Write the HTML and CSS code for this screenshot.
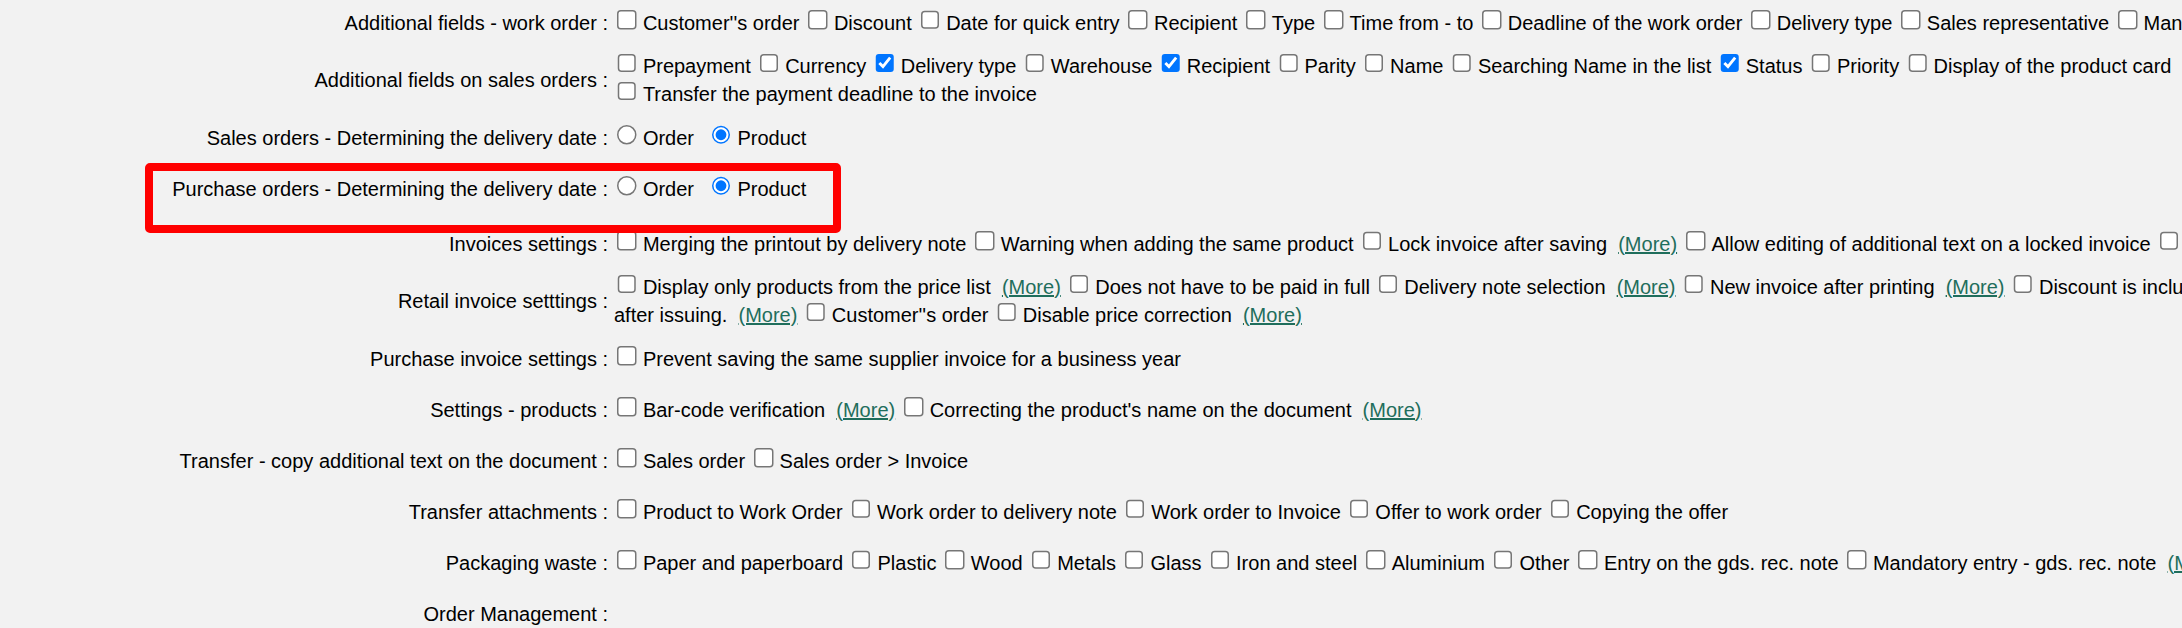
FILE: index.html
```html
<!DOCTYPE html>
<html>
<head>
<meta charset="utf-8">
<title>Settings</title>
<link rel="stylesheet" href="styles.css">
</head>
<body>
<div class="page">
<table class="settings">
<colgroup><col class="lblcol"><col class="valcol"></colgroup>
<tr>
  <th>Additional fields - work order :</th>
  <td><input type="checkbox">Customer''s order <input type="checkbox">Discount <input type="checkbox">Date for quick entry <input type="checkbox">Recipient <input type="checkbox">Type <input type="checkbox">Time from - to <input type="checkbox">Deadline of the work order <input type="checkbox">Delivery type <input type="checkbox">Sales representative <input type="checkbox">Manager</td>
</tr>
<tr>
  <th>Additional fields on sales orders :</th>
  <td><input type="checkbox">Prepayment <input type="checkbox">Currency <input type="checkbox" checked>Delivery type <input type="checkbox">Warehouse <input type="checkbox" checked>Recipient <input type="checkbox">Parity <input type="checkbox">Name <input type="checkbox">Searching Name in the list <input type="checkbox" checked>Status <input type="checkbox">Priority <input type="checkbox">Display of the product card<br><input type="checkbox">Transfer the payment deadline to the invoice</td>
</tr>
<tr>
  <th>Sales orders - Determining the delivery date :</th>
  <td><label class="opt"><input type="radio" name="so">Order</label> <label class="opt next"><input type="radio" name="so" checked>Product</label></td>
</tr>
<tr class="tall">
  <th>Purchase orders - Determining the delivery date :</th>
  <td><label class="opt"><input type="radio" name="po">Order</label> <label class="opt next"><input type="radio" name="po" checked>Product</label></td>
</tr>
<tr>
  <th>Invoices settings :</th>
  <td><input type="checkbox">Merging the printout by delivery note <input type="checkbox">Warning when adding the same product <input type="checkbox">Lock invoice after saving&nbsp; <a class="more" href="#">(More)</a> <input type="checkbox">Allow editing of additional text on a locked invoice <input type="checkbox">Print the invoice</td>
</tr>
<tr>
  <th>Retail invoice setttings :</th>
  <td><input type="checkbox">Display only products from the price list&nbsp; <a class="more" href="#">(More)</a> <input type="checkbox">Does not have to be paid in full <input type="checkbox">Delivery note selection&nbsp; <a class="more" href="#">(More)</a> <input type="checkbox">New invoice after printing&nbsp; <a class="more" href="#">(More)</a> <input type="checkbox">Discount is included in the price<br>after issuing.&nbsp; <a class="more" href="#">(More)</a> <input type="checkbox">Customer''s order <input type="checkbox">Disable price correction&nbsp; <a class="more" href="#">(More)</a></td>
</tr>
<tr>
  <th>Purchase invoice settings :</th>
  <td><input type="checkbox">Prevent saving the same supplier invoice for a business year</td>
</tr>
<tr>
  <th>Settings - products :</th>
  <td><input type="checkbox">Bar-code verification&nbsp; <a class="more" href="#">(More)</a> <input type="checkbox">Correcting the product's name on the document&nbsp; <a class="more" href="#">(More)</a></td>
</tr>
<tr>
  <th>Transfer - copy additional text on the document :</th>
  <td><input type="checkbox">Sales order <input type="checkbox">Sales order &gt; Invoice</td>
</tr>
<tr>
  <th>Transfer attachments :</th>
  <td><input type="checkbox">Product to Work Order <input type="checkbox">Work order to delivery note <input type="checkbox">Work order to Invoice <input type="checkbox">Offer to work order <input type="checkbox">Copying the offer</td>
</tr>
<tr>
  <th>Packaging waste :</th>
  <td><input type="checkbox">Paper and paperboard <input type="checkbox">Plastic <input type="checkbox">Wood <input type="checkbox">Metals <input type="checkbox">Glass <input type="checkbox">Iron and steel <input type="checkbox">Aluminium <input type="checkbox">Other <input type="checkbox">Entry on the gds. rec. note <input type="checkbox">Mandatory entry - gds. rec. note&nbsp; <a class="more" href="#">(More)</a></td>
</tr>
<tr>
  <th>Order Management :</th>
  <td></td>
</tr>
</table>
<div class="highlight"></div>
</div>
</body>
</html>
```
FILE: styles.css
```css
html, body {
  margin: 0;
  padding: 0;
  overflow: hidden;
  background: #f2f2f2;
}
body {
  font-family: "Liberation Sans", Arial, sans-serif;
  font-size: 20px;
  color: #000;
}
.page {
  position: relative;
  display: flow-root;
}
.settings {
  border-collapse: collapse;
  table-layout: fixed;
  width: 3200px;
  margin-top: -3px;
  white-space: nowrap;
}
.lblcol {
  width: 614px;
}
.settings th,
.settings td {
  height: 43px;
  padding: 4px 0;
  vertical-align: middle;
  line-height: 28px;
  overflow: visible;
}
.settings th {
  padding-right: 6px;
  text-align: right;
  font-weight: normal;
}
.settings td {
  text-align: left;
}
.settings .tall th,
.settings .tall td {
  padding-bottom: 8px;
}
.settings input[type="checkbox"],
.settings input[type="radio"] {
  zoom: 1.5;
  margin: 0 4px 1px 2.25px;
  vertical-align: baseline;
}
.settings input[type="radio"] {
  margin-bottom: 1.5px;
}
.opt.next {
  margin-left: 9px;
}
.more {
  color: #1f6e5c;
  text-decoration: underline;
}
.highlight {
  position: absolute;
  left: 145px;
  top: 163px;
  width: 680px;
  height: 54px;
  border: 8px solid #ff0000;
  border-radius: 5px;
}
```
